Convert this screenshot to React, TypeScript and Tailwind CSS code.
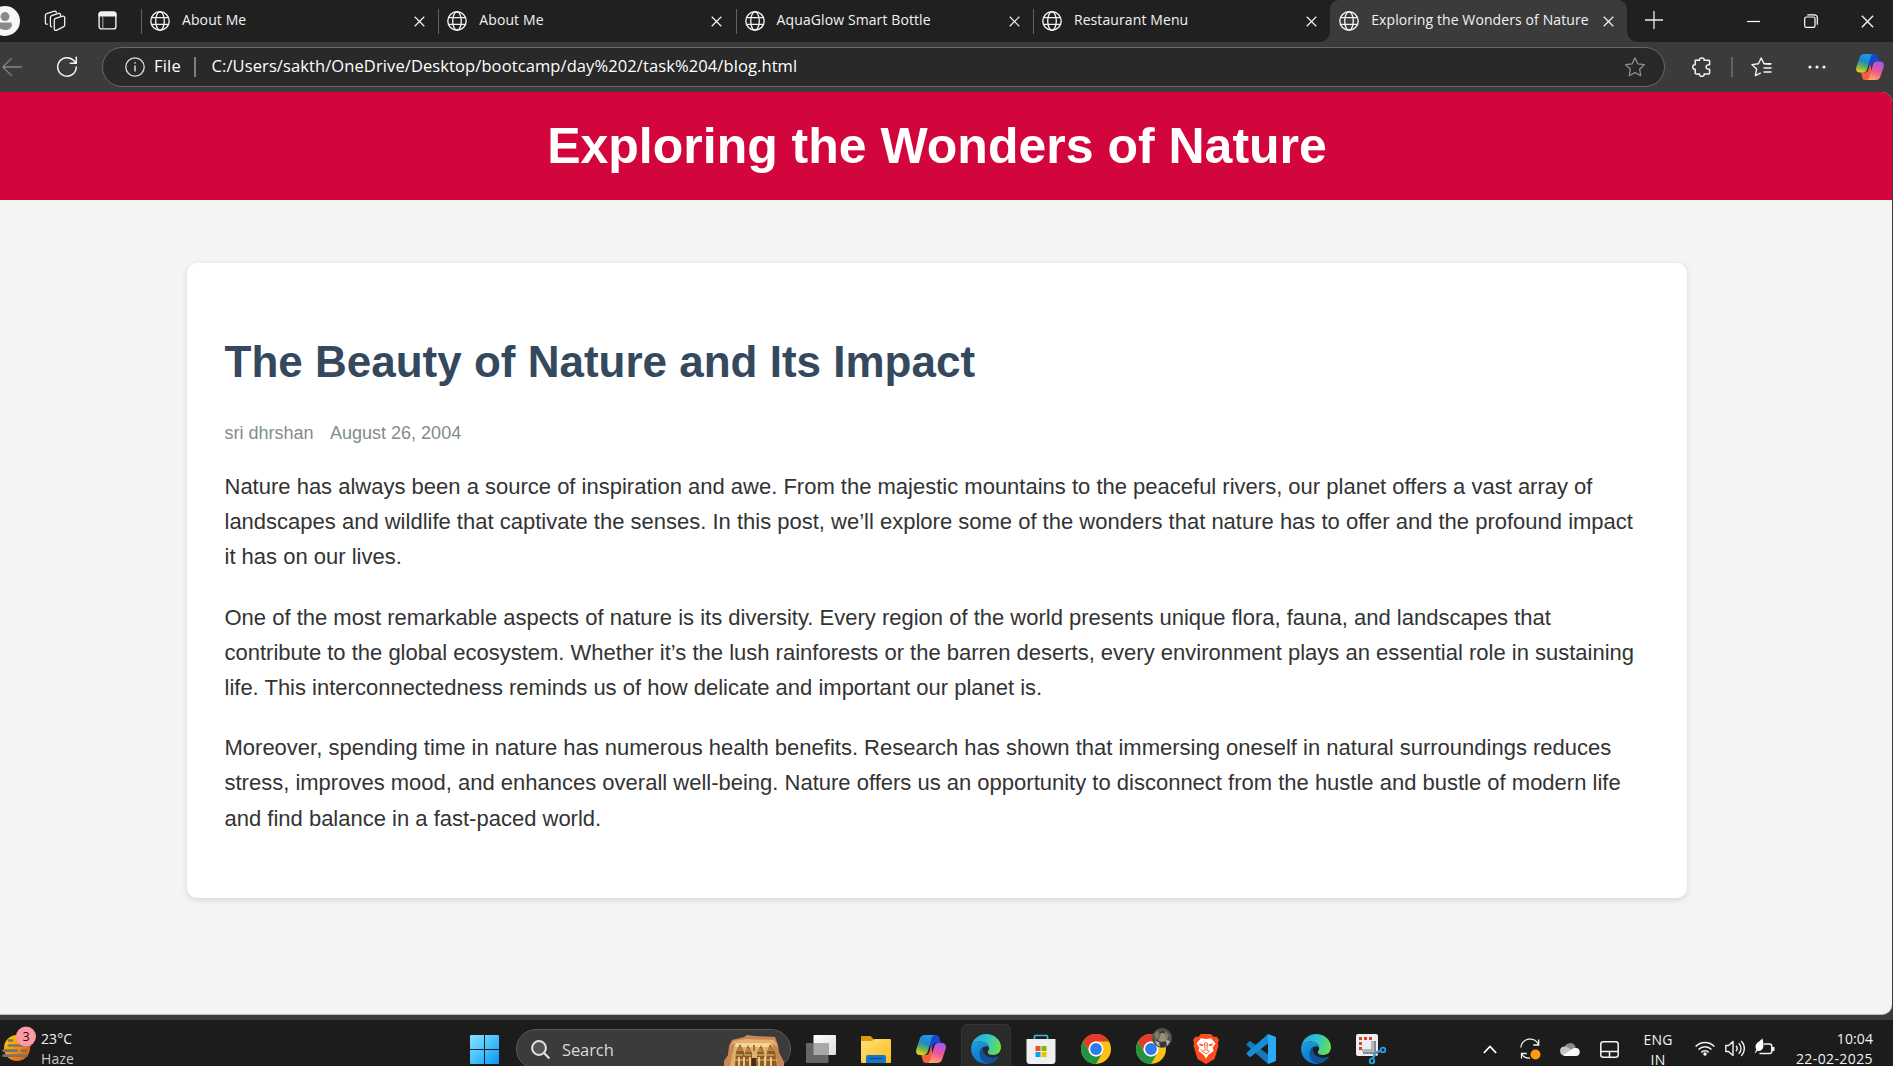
import React from "react";

const Globe = () => (
  <svg viewBox="0 0 20 20" className="size-5 shrink-0" fill="none" stroke="#f2f2f2" strokeWidth="1.35">
    <circle cx="10" cy="10" r="9.2" />
    <ellipse cx="10" cy="10" rx="4.3" ry="9.2" />
    <path d="M1.6 6.6h16.8M1.6 13.4h16.8" />
  </svg>
);

const Cross = ({ className }: { className: string }) => (
  <svg viewBox="0 0 12 12" className={className} fill="none" stroke="#f2f2f2" strokeWidth="1.3">
    <path d="M.8.8l10.4 10.4M11.2.8L.8 11.2" />
  </svg>
);

function Tab({ title, divider = true, active = false }: { title: string; divider?: boolean; active?: boolean }) {
  return (
    <div
      className={
        active
          ? "relative flex h-[42px] w-[297px] shrink-0 items-center rounded-t-[9px] bg-[#3b3b3b] pl-[9px]"
          : "flex h-[42px] w-[297.3px] shrink-0 items-center"
      }
    >
      {!active && <div className={divider ? "mr-2 h-[25px] w-px bg-[#636363]" : "mr-2 w-px"} />}
      <Globe />
      <span className="ml-3 w-[232px] shrink-0 whitespace-nowrap pb-[3px] text-[14px] tracking-[0.1px] text-[#f2f2f2]">{title}</span>
      <Cross className="size-[11px] shrink-0" />
      {active && (
        <>
          <div className="absolute -left-[10px] bottom-0 size-[10px] bg-[radial-gradient(circle_at_0_0,#202020_9.5px,#3b3b3b_10px)]" />
          <div className="absolute -right-[10px] bottom-0 size-[10px] bg-[radial-gradient(circle_at_100%_0,#202020_9.5px,#3b3b3b_10px)]" />
        </>
      )}
    </div>
  );
}

function TabStrip() {
  return (
    <div className="flex h-[42px] shrink-0 items-center overflow-hidden bg-[#202020]">
      <div className="flex w-[141px] shrink-0 items-center">
        <svg viewBox="0 0 30 30" className="-ml-[10px] size-[30px] shrink-0">
          <circle cx="15" cy="15" r="15" fill="#f7f7f7" />
          <circle cx="15" cy="10.6" r="4.5" fill="#8a8a8a" />
          <path d="M8 18.5a2 2 0 0 1 2-2h10a2 2 0 0 1 2 2c0 3.500-3 5.500-7 5.500s-7-2-7-5.500z" fill="#8a8a8a" />
        </svg>
        <svg viewBox="0 0 22 22" className="ml-[23.5px] size-[22px] shrink-0" fill="none" stroke="#f0f0f0" strokeWidth="1.3" strokeLinejoin="round" strokeLinecap="round">
          <path d="M11.500 8.300l7.300-2.100a1.500 1.500 0 0 1 1.900 1.500v7.200a2 2 0 0 1-1.400 1.900l-6.900 3.500a1.500 1.500 0 0 1-2.100-1.400v-8.500a2 2 0 0 1 1.200-2.100z" />
          <path d="M16.500 5.500v-.9a1.400 1.400 0 0 0-1.900-1.300L7.700 5.600a2 2 0 0 0-1.300 1.900v7.800a1.400 1.400 0 0 0 1.200 1.500" />
          <path d="M12.300 2.800v-.4A1.400 1.400 0 0 0 10.500 1.200L2.800 3.700a2 2 0 0 0-1.400 1.900v7.300a1.400 1.400 0 0 0 1.800 1.300" />
        </svg>
        <svg viewBox="0 0 19 19" className="mb-px ml-8 size-[19px] shrink-0" fill="none">
          <rect x="1.100" y="1.100" width="16.800" height="16.800" rx="2.500" stroke="#f2f2f2" strokeWidth="1.400" />
          <path d="M.5 5.500V3a2.500 2.500 0 0 1 2.500-2.500h13a2.500 2.500 0 0 1 2.500 2.500v2.500z" fill="#f2f2f2" />
          <path d="M4.800 5v12.500" stroke="#999" strokeWidth="1.200" />
        </svg>
      </div>
      <Tab title="About Me" />
      <Tab title="About Me" />
      <Tab title="AquaGlow Smart Bottle" />
      <Tab title="Restaurant Menu" />
      <Tab title="Exploring the Wonders of Nature" active />
      <svg viewBox="0 0 18 18" className="mb-[2px] ml-[18px] size-[18px] shrink-0" stroke="#ececec" strokeWidth="1.300">
        <path d="M9 0v18M0 9h18" />
      </svg>
      <svg viewBox="0 0 13 13" className="ml-[84px] size-[13px] shrink-0" stroke="#fff" strokeWidth="1.200">
        <path d="M0 6.500h13" />
      </svg>
      <svg viewBox="0 0 14 14" className="ml-[43.500px] size-[14px] shrink-0" fill="none" stroke="#fff" strokeWidth="1.200">
        <rect x=".7" y="3" width="10.300" height="10.300" rx="1.600" />
        <path d="M3.300.8h7.200a2.800 2.800 0 0 1 2.800 2.800v7.200" />
      </svg>
      <Cross className="ml-[43.500px] size-[13px] shrink-0" />
    </div>
  );
}

const Copilot = ({ className, id }: { className: string; id: string }) => (
  <svg viewBox="0 0 30 28" className={className}>
    <defs>
      <linearGradient id={`${id}-a`} x1=".6" y1="0" x2=".3" y2="1">
        <stop offset="0" stopColor="#199cf0" />
        <stop offset=".4" stopColor="#2186c8" />
        <stop offset=".7" stopColor="#63b45c" />
        <stop offset="1" stopColor="#f5cf0c" />
      </linearGradient>
      <linearGradient id={`${id}-b`} x1=".6" y1="0" x2=".3" y2="1">
        <stop offset="0" stopColor="#a457ee" />
        <stop offset=".5" stopColor="#ee5596" />
        <stop offset="1" stopColor="#ffab67" />
      </linearGradient>
    </defs>
    <path d="M14 0h6.300c1.600 0 2.500 1 3 2.500L25 8h-4.500c-2 0-3 1-3.500 3L15 16 13 9z" fill="#1747cc" />
    <path d="M16 28H9.800c-1.700 0-2.600-1-3-2.500L5.200 20h4.600c2 0 2.900-1 3.500-3L15 11l2 9z" fill="#f2613f" />
    <path d="M8.800 0H19c-1.800 0-2.800 1.200-3.400 3.300l-3.800 13.200c-.7 2.300-2 3.500-4.200 3.500H4c-3.200 0-4.500-2.300-3.700-5.700L3.800 3.800C4.600 1.200 6.200 0 8.800 0z" fill={`url(#${id}-a)`} />
    <path d="M21.200 28H11c1.800 0 2.800-1.200 3.400-3.300l3.800-13.200C18.900 9.200 20.200 8 22.400 8H26c3.200 0 4.500 2.300 3.700 5.700l-3.500 10.500c-.8 2.600-2.400 3.800-5 3.800z" fill={`url(#${id}-b)`} />
  </svg>
);

function Toolbar() {
  return (
    <div className="flex h-[50px] shrink-0 items-center overflow-hidden bg-[#3b3b3b]">
      <svg viewBox="0 0 20 18" className="ml-[2px] h-[18px] w-5 shrink-0" fill="none" stroke="#858585" strokeWidth="1.300" strokeLinecap="round" strokeLinejoin="round">
        <path d="M19.500 9H.8M9.300.6L.8 9l8.500 8.400" />
      </svg>
      <svg viewBox="0 0 22 22" className="ml-[34px] size-[22px] shrink-0" fill="none" stroke="#f5f5f5" strokeWidth="1.500" strokeLinecap="round" strokeLinejoin="round">
        <path d="M20.300 11A9.300 9.300 0 1 1 17.800 4.600L20 7.200M20.300 1.300V7.300H14.300" />
      </svg>
      <div className="ml-6 flex h-10 w-[1563px] shrink-0 items-center rounded-full border border-[#686868] bg-[#292929]">
        <svg viewBox="0 0 20 20" className="ml-[22px] size-5 shrink-0" fill="none" stroke="#ddd" strokeWidth="1.300">
          <circle cx="10" cy="10" r="9.200" />
          <path d="M10 8.600v6" strokeWidth="1.500" />
          <circle cx="10" cy="5.900" r=".5" strokeWidth="1" />
        </svg>
        <span className="ml-[9px] w-[40px] pb-px text-[16.500px] tracking-[0.2px] text-white">File</span>
        <div className="h-5 w-[1.500px] bg-[#808080]" />
        <span className="ml-4 flex-1 whitespace-nowrap pb-px text-[16.500px] tracking-[0.1px] text-white">C:/Users/sakth/OneDrive/Desktop/bootcamp/day%202/task%204/blog.html</span>
        <svg viewBox="0 0 20 20" className="mr-[19px] size-5 shrink-0" fill="none" stroke="#8d8d8d" strokeWidth="1.300" strokeLinejoin="round">
          <path d="M10 .9l2.800 5.900 6.500.9-4.700 4.500 1.200 6.500L10 15.600l-5.800 3.100 1.200-6.500L.7 7.700l6.500-.9z" />
        </svg>
      </div>
      <svg viewBox="0 0 20 20" className="ml-[26.500px] size-5 shrink-0" fill="none" stroke="#f4f4f4" strokeWidth="1.500" strokeLinejoin="round">
        <path d="M3.200 3.300h4.300c-.7-3.200 5.300-3.200 4.600 0h4.500a1 1 0 0 1 1 1v3.400c-4.700-.7-4.700 5.300 0 4.600V16a1 1 0 0 1-1 1h-4.500c.7 3.200-5.300 3.200-4.600 0H4.200a1 1 0 0 1-1-1v-3.700c-3.200.7-3.200-5.300 0-4.600z" />
      </svg>
      <div className="ml-[19.500px] h-5 w-[1.500px] bg-[#636363]" />
      <svg viewBox="0 0 21 20" className="ml-[18.500px] h-5 w-[21px] shrink-0" fill="none" stroke="#f4f4f4" strokeWidth="1.400" strokeLinejoin="round">
        <path d="M19.500 7.300L13 6.700 10.200 1 7.400 6.700l-6.500.9 4.700 4.500-1.200 6.500 5.400-2.800M13.500 6.700H20.500M12.500 11H20.500M12.500 15H20.500" />
      </svg>
      <svg viewBox="0 0 18 4" className="ml-[35.500px] h-1 w-[18px] shrink-0" fill="#f4f4f4">
        <circle cx="2" cy="2" r="1.600" />
        <circle cx="9" cy="2" r="1.600" />
        <circle cx="16" cy="2" r="1.600" />
      </svg>
      <Copilot id="bar" className="ml-[30px] h-[26px] w-7 shrink-0" />
    </div>
  );
}

function Page() {
  return (
    <div className="flex h-[928px] shrink-0 bg-[#3b3b3b] pr-px pb-[5px]">
      <div className="flex-1 overflow-hidden rounded-r-[10px] border-b border-[#b9bdba] bg-[#f4f4f4] font-['Liberation_Sans',Arial,sans-serif]">
        <header className="flex h-[108px] items-center justify-center bg-[#d2063c] pr-[18px]">
          <h1 className="text-[50px] font-bold leading-[58px] text-white">Exploring the Wonders of Nature</h1>
        </header>
        <main className="pt-[63px] pr-[18px]">
          <article className="mx-auto h-[635px] w-[1500px] rounded-[10px] bg-white px-[37.500px] pt-[73px] shadow-[0_2px_6px_rgba(0,0,0,0.13)]">
            <h2 className="text-[44px] font-bold leading-[52px] text-[#34495e]">The Beauty of Nature and Its Impact</h2>
            <div className="mt-[31px] flex gap-[16.500px] text-[18px] leading-7 text-[#7f8c8d]">
              <span>sri dhrshan</span>
              <span>August 26, 2004</span>
            </div>
            <div className="mt-[22px] flex flex-col gap-[25px] text-[22px] leading-[35.2px] text-[#333]">
              <p>
                Nature has always been a source of inspiration and awe. From the majestic mountains to the peaceful rivers, our planet offers a vast array of landscapes and wildlife that captivate the senses. In this post, we’ll explore some of the wonders that nature has to offer and the profound impact it has on our lives.
              </p>
              <p>
                One of the most remarkable aspects of nature is its diversity. Every region of the world presents unique flora, fauna, and landscapes that contribute to the global ecosystem. Whether it’s the lush rainforests or the barren deserts, every environment plays an essential role in sustaining life. This interconnectedness reminds us of how delicate and important our planet is.
              </p>
              <p>
                Moreover, spending time in nature has numerous health benefits. Research has shown that immersing oneself in natural surroundings reduces stress, improves mood, and enhances overall well-being. Nature offers us an opportunity to disconnect from the hustle and bustle of modern life and find balance in a fast-paced world.
              </p>
            </div>
          </article>
        </main>
      </div>
    </div>
  );
}

const Edge = ({ id }: { id: string }) => (
  <svg viewBox="0 0 30 30" className="size-[30px]">
    <defs>
      <linearGradient id={`${id}-t`} x1="0" y1=".3" x2="1" y2=".5">
        <stop offset="0" stopColor="#2aa5dc" />
        <stop offset=".5" stopColor="#2fc3cf" />
        <stop offset="1" stopColor="#6be04c" />
      </linearGradient>
      <linearGradient id={`${id}-l`} x1="0" y1="0" x2=".4" y2="1">
        <stop offset="0" stopColor="#1fa0dc" />
        <stop offset="1" stopColor="#0873cf" />
      </linearGradient>
    </defs>
    <path d="M.2 13C1.200 5.500 7.500 0 15 0c8.500 0 15 6 15 13 0 5-3.500 8-8 8-3.500 0-5.300-1.500-5.300-2.800 0-1 1.500-1.600 1.500-4.100C18.200 10.500 14 7.500 9.500 7.500 5 7.500 1.500 9.500.2 13z" fill={`url(#${id}-t)`} />
    <path d="M.2 13C1.200 9.500 5 7.500 9.500 7.500c4.800 0 8.700 3 8.700 6.600 0 0-1.300-2-3.900-1.700-3.800.4-5.900 4-5.500 8 .4 4.500 4.200 8.600 9.700 9.200C9 31.800-1 24.500.2 13z" fill={`url(#${id}-l)`} />
    <path d="M12.200 13c-2.600 1.600-3.800 4.500-3.400 7.500.6 5 5 9.300 10 9 3.500-.7 6.800-3 8.800-6.300.4-.7-.2-1.100-.8-.8-5.800 2.800-12.200.6-14.200-3.900-.8-1.900-.9-3.800-.4-5.500z" fill="#12509e" />
  </svg>
);

const Chrome = () => (
  <svg viewBox="0 0 30 30" className="size-[30px] shrink-0">
    <circle cx="15" cy="15" r="15" fill="#fbc116" />
    <path d="M2 7.500A15 15 0 0 1 28 7.500H15A7.500 7.500 0 0 0 8.500 18.700z" fill="#e33b2e" />
    <path d="M2 7.500l6.500 11.300A7.500 7.500 0 0 0 21.500 18.700L15 30A15 15 0 0 1 2 7.500z" fill="#229342" />
    <circle cx="15" cy="15" r="7.500" fill="#fff" />
    <circle cx="15" cy="15" r="5.900" fill="#2d79ee" />
  </svg>
);

const SearchArt = () => (
  <svg viewBox="0 0 60 31" className="h-[31px] w-[60px] shrink-0">
    <path d="M0 31v-5l4-6 1-9 3-6 12-3 3-2 8 1 20 1 3 8 1 7 5 10v4z" fill="#c98753" />
    <path d="M5 11l5-5 12-2 28 1 4 7-8-5H13z" fill="#e9ae77" />
    <path d="M11 7h37l6 24H6z" fill="#dcb36a" />
    <path d="M12 8h35l1 4H11z" fill="#f6d793" />
    <path d="M11 31l1-14 4-8 4 8 2 14zM20 31l1-13 3-8 4 8v13zM33 31V18l4-8 3 8 1 13zM42 31l1-14 3-8 5 8 2 14z" fill="#8d5a2a" />
    <path d="M13 16l3-5 3 5zm8 1l3-5 3 5zm12 0l3-5 3 5zm10-1l3-5 4 5z" fill="#bc823f" />
    <path d="M12 20h7m2 0h6m6 0h7m3 0h7M11 25h9m2 0h5m6 0h8m2 0h10" stroke="#edc37a" strokeWidth="1" />
    <path d="M15 22v9m5-9v9m6-9v9m9-9v9m6-9v9m6-9v9" stroke="#f3d18b" strokeWidth="1.800" />
    <path d="M27.500 23h5v8h-5z" fill="#4a2b13" />
    <path d="M29 10h2v6h-2z" fill="#a36f32" />
  </svg>
);

const Cell = ({ children, active = false }: { children: React.ReactNode; active?: boolean }) => (
  <div className="flex w-[55px] shrink-0 justify-center">
    <div
      className={
        active
          ? "flex h-[50px] w-[50px] justify-center rounded-[6px] border border-[#353535] bg-[#2a2a2a] pt-[9px]"
          : "flex h-[50px] w-[50px] justify-center pt-[10px]"
      }
    >
      {children}
    </div>
  </div>
);

function Taskbar() {
  return (
    <div className="flex h-[46px] shrink-0 overflow-hidden bg-[#1c1c1c] text-[#f2f2f2]">
      <div className="flex w-[470px] shrink-0 items-start">
        <svg viewBox="0 0 36 36" className="ml-[2px] mt-[6px] size-9 shrink-0">
          <defs>
            <linearGradient id="sun" x1="0" y1="0" x2="1" y2="1">
              <stop offset=".1" stopColor="#ffc60a" />
              <stop offset=".9" stopColor="#e5590b" />
            </linearGradient>
          </defs>
          <circle cx="15" cy="22" r="13" fill="url(#sun)" />
          <path d="M7 14.500h3M7 19.500h21M1.500 24.700h13M20 24.700h4M1.500 29.600h23" stroke="#747474" strokeWidth="2.700" strokeLinecap="round" />
          <circle cx="24" cy="10.500" r="10" fill="#ff99a4" />
          <text x="24" y="15" textAnchor="middle" fontSize="12.500" fill="#111">3</text>
        </svg>
        <div className="ml-[3px] mt-[13px] flex flex-col gap-2 text-[14px] leading-3 tracking-[0.1px]">
          <div>23°C</div>
          <div className="text-[#c8c8c8]">Haze</div>
        </div>
      </div>
      <svg viewBox="0 0 29 29" className="mt-[15px] size-[29px] shrink-0">
        <defs>
          <linearGradient id="win" x1="0" y1="0" x2="1" y2="1" >
            <stop offset="0" stopColor="#8ce1ff" />
            <stop offset=".5" stopColor="#45c3fd" />
            <stop offset="1" stopColor="#0a93f6" />
          </linearGradient>
        </defs>
        <path d="M1 0h13v14H0V1a1 1 0 0 1 1-1zM15 0h13a1 1 0 0 1 1 1v13H15zM0 15h14v14H1a1 1 0 0 1-1-1zM15 15h14v13a1 1 0 0 1-1 1H15z" fill="url(#win)" />
      </svg>
      <div className="ml-[17px] mt-[9px] flex h-10 w-[275px] shrink-0 items-start rounded-full border border-[#5a5a5a] bg-[#3b3b3b]">
        <svg viewBox="0 0 19 19" className="ml-[14px] mt-[10px] size-[19px] shrink-0" fill="none" stroke="#dfe3e8" strokeWidth="2" strokeLinecap="round">
          <circle cx="8" cy="8" r="6.900" fill="#555" />
          <path d="M13 13l4.700 4.700" strokeWidth="2.300" />
        </svg>
        <span className="ml-[12px] mt-[8px] w-[162px] shrink-0 text-[16.500px] leading-6 tracking-[-0.1px] text-[#d8d8d8]">Search</span>
        <div className="mt-[5px] h-[32px] overflow-hidden"><SearchArt /></div>
      </div>
      <div className="ml-[2px] mt-1 flex shrink-0">
        <Cell>
          <svg viewBox="0 0 30 30" className="size-[30px]">
            <defs>
              <linearGradient id="tv" x1="0" y1="0" x2="1" y2="1"><stop stopColor="#fff" /><stop offset="1" stopColor="#dedede" /></linearGradient>
            </defs>
            <rect x="7.500" y="1" width="22.500" height="20" rx="1" fill="url(#tv)" />
            <rect x="0" y="9" width="22.500" height="20" rx="1" fill="#666" />
            <path d="M7.500 9h15v12h-15z" fill="#a9a9a9" />
          </svg>
        </Cell>
        <Cell>
          <svg viewBox="0 0 30 30" className="size-[30px]">
            <defs>
              <linearGradient id="fold" x1="0" y1="0" x2="1" y2="1"><stop stopColor="#ffe07c" /><stop offset="1" stopColor="#fcbd1a" /></linearGradient>
            </defs>
            <path d="M0 3a1 1 0 0 1 1-1h8.500l3.500 3.500H29V12H0z" fill="#dd9b05" />
            <path d="M0 7h11l2.500-2H29a1 1 0 0 1 1 1v22a1 1 0 0 1-1 1H1a1 1 0 0 1-1-1z" fill="url(#fold)" />
            <path d="M5 29v-6a2 2 0 0 1 2-2h16a2 2 0 0 1 2 2v6z" fill="#1478c8" />
            <path d="M8 24.500h14" stroke="#0b4d8c" strokeWidth="1.200" />
          </svg>
        </Cell>
        <Cell><Copilot id="task" className="mt-px h-[28px] w-[30px]" /></Cell>
        <Cell active><Edge id="e1" /></Cell>
        <Cell>
          <svg viewBox="0 0 30 30" className="size-[30px]">
            <path d="M8.500 6V2.500a1 1 0 0 1 1-1h11a1 1 0 0 1 1 1V6" fill="none" stroke="#34b9ee" strokeWidth="1.700" />
            <path d="M.5 5h29v21.500a3.500 3.500 0 0 1-3.500 3.500H4a3.500 3.500 0 0 1-3.500-3.500z" fill="#f0f0f1" />
            <path d="M9.500 12h5v5h-5z" fill="#f25022" /><path d="M15.500 12h5v5h-5z" fill="#7fba00" />
            <path d="M9.500 18h5v5h-5z" fill="#00a4ef" /><path d="M15.500 18h5v5h-5z" fill="#ffb900" />
          </svg>
        </Cell>
        <Cell><Chrome /></Cell>
        <Cell>
          <div className="relative size-[30px]">
            <Chrome />
            <svg viewBox="0 0 20 20" className="absolute -top-[6px] left-4 size-5">
              <circle cx="10" cy="10" r="10" fill="#535647" />
              <path d="M2 6l4-3 2 5-4 4zM13 3l4 4-2 5-3-4z" fill="#788062" />
              <path d="M9 4c3-2 5 1 4 4l2 4-3 5H7l-1-5 2-3z" fill="#a08a7c" />
              <path d="M8 5c1-3 5-3 5 1l-2-1zM5 12l4 2 6-1-2 6H6z" fill="#333839" />
              <path d="M3 13l4 1 1 5-3-2zM14 12l4 1-3 5z" fill="#b3b7bb" />
            </svg>
          </div>
        </Cell>
        <Cell>
          <svg viewBox="0 0 26 30" className="h-[30px] w-[26px]">
            <path d="M8 0h10l3 3 2.500-.5L26 6l-1 3 .5 3-4 13L13 30l-8.500-5L.5 12 1 9 0 6l2.500-3.500L5 3z" fill="#fb4c20" />
            <path d="M13 5l5-.8 4.500 5.300-2.800 4 .8 3.500-4.700 3.500-2.800 4-2.800-4-4.700-3.500.8-3.500-2.800-4L8 4.200z" fill="#fff" />
            <path d="M6 9.500l4.500 1-.8 1.500-3-.5zM20 9.500l-4.500 1 .8 1.500 3-.5zM11 9.500L13 8l2 1.500-.8 6L17 17.500 13 20l-4-2.500 2.800-2zM7.500 14.500L10 17l-2-.5z" fill="#fb4c20" />
            <path d="M12.300 9h1.400l-.2 7h-1zM10 17.500l3-1.500 3 1.500-3 1.700z" fill="#fff" />
          </svg>
        </Cell>
        <Cell>
          <svg viewBox="0 0 30 30" className="size-[30px]">
            <path d="M1 9.500l2-2a1.500 1.500 0 0 1 2 0L22 20.500V30L1 11.500a1.400 1.400 0 0 1 0-2z" fill="#1679b9" />
            <path d="M1 20.500l2 2a1.500 1.500 0 0 0 2 0L22 9.500V0L1 18.500a1.400 1.400 0 0 0 0 2z" fill="#168dd5" />
            <path d="M22 0l7 2.500a1.500 1.500 0 0 1 1 1.500v22a1.500 1.500 0 0 1-1 1.500L22 30z" fill="#2aaaf3" />
          </svg>
        </Cell>
        <Cell><Edge id="e2" /></Cell>
        <Cell>
          <svg viewBox="0 0 30 30" className="size-[30px] overflow-visible">
            <rect x="0" y="0" width="22" height="22" rx="2" fill="#eceff2" />
            <path d="M16.500 7v9.500H6" fill="none" stroke="#a8adb3" strokeWidth="2.500" />
            <path d="M4.500 16V4.500H17" fill="none" stroke="#d8431c" strokeWidth="3" strokeDasharray="3 2" />
            <path d="M19 7v14l-3 4M7 19h14l4-3" fill="none" stroke="#808a94" strokeWidth="2" />
            <circle cx="27" cy="16" r="2.300" fill="none" stroke="#22a0e4" strokeWidth="1.800" />
            <circle cx="16" cy="27" r="2.300" fill="none" stroke="#22a0e4" strokeWidth="1.800" />
            <path d="M20 18l5-1.500M17 25l1.500-5" stroke="#22a0e4" strokeWidth="1.800" />
          </svg>
        </Cell>
      </div>
      <div className="ml-[85px] flex shrink-0 items-start">
        <svg viewBox="0 0 14 9" className="mt-[25px] h-[9px] w-[14px] shrink-0" fill="none" stroke="#fff" strokeWidth="1.800"><path d="M.8 8L7 1.500 13.200 8" /></svg>
        <svg viewBox="0 0 20 21" className="ml-[23px] mt-[18px] h-[21px] w-5 shrink-0 overflow-visible" fill="none" stroke="#f2f2f2" strokeWidth="1.300">
          <path d="M.8 9.500A9.300 9.300 0 0 1 18.500 6.500M18.700 1.500v5.500h-5.500M6.800 15.500H1.500v5M1.500 15.700c2 3.600 5 4.800 8.500 4.300" />
          <circle cx="15.500" cy="16.500" r="5" fill="#ff9a0e" stroke="none" />
        </svg>
        <svg viewBox="0 0 20 14" className="ml-5 mt-[22px] h-[14px] w-5 shrink-0">
          <path d="M4.500 5.500A5.800 5.800 0 0 1 15.300 4.300L16 8 8 10z" fill="#8c8c8c" />
          <path d="M4.500 13.500a4.500 4.500 0 0 1-.8-8.900c2-.4 3.500.4 5 1.500l5 3.400-3 4z" fill="#c5c5c5" />
          <path d="M3 13.200L12.500 6.800a4 4 0 0 1 3-.8 4 4 0 0 1 .5 8H5a4 4 0 0 1-2-.8z" fill="#f8f8f8" />
        </svg>
        <svg viewBox="0 0 19 17" className="ml-5 mt-[21px] h-[17px] w-[19px] shrink-0" fill="none" stroke="#f2f2f2" strokeWidth="1.500">
          <rect x=".8" y=".8" width="17.400" height="15.400" rx="2.500" /><path d="M.8 10.500h17.400M9.500 10.500v5.700" />
        </svg>
        <div className="ml-[22px] mt-[14px] flex w-[34px] flex-col gap-2 text-center text-[14px] leading-3 tracking-[0.2px]">
          <div>ENG</div><div>IN</div>
        </div>
        <svg viewBox="0 0 20 15" className="ml-[20px] mt-[21px] h-[15px] w-5 shrink-0" fill="none" stroke="#f2f2f2" strokeWidth="1.500">
          <path d="M.6 5.500a13 13 0 0 1 18.800 0M3.500 8.600a9 9 0 0 1 13 0M6.300 11.400a5.200 5.200 0 0 1 7.400 0" />
          <circle cx="10" cy="13" r="1.700" fill="#fff" stroke="none" />
        </svg>
        <svg viewBox="0 0 20 17" className="ml-[10px] mt-[20px] h-[17px] w-5 shrink-0" fill="none" stroke="#f2f2f2" strokeWidth="1.400" strokeLinejoin="round">
          <path d="M.8 5.500h2.700L8 1.500v14L3.500 11.500H.8z" /><path d="M11 5.800a4 4 0 0 1 0 5.400M13.700 3.300a7 7 0 0 1 0 10.400M16.300.9a11 11 0 0 1 0 15.200" />
        </svg>
        <svg viewBox="0 0 21 19" className="ml-[9px] mt-[18px] h-[19px] w-[21px] shrink-0" fill="none" stroke="#f2f2f2" strokeWidth="1.500">
          <path d="M10 6h5.500a2.300 2.300 0 0 1 2.300 2.300v4.900a2.300 2.300 0 0 1-2.300 2.300H5.500" /><path d="M18 9h2.500v4H18z" fill="#f2f2f2" stroke="none" />
          <path d="M8.500.5c1 4 2 9-1 11.500-2 1.500-4 .8-4 .8L.5 16l1.800-4.500C-.5 6 5 4 8.500.5z" fill="#fff" stroke="none" />
        </svg>
        <div className="ml-[10px] mt-[13px] flex w-[88px] flex-col gap-2 whitespace-nowrap text-right text-[14px] leading-3">
          <div className="tracking-[0.1px]">10:04</div><div className="tracking-[0.4px]">22-02-2025</div>
        </div>
      </div>
    </div>
  );
}

export default function App() {
  return (
    <div className="flex h-[1066px] w-[1893px] flex-col overflow-hidden bg-[#1c1c1c] font-['Open_Sans','Noto_Sans',sans-serif]">
      <TabStrip />
      <Toolbar />
      <Page />
      <Taskbar />
    </div>
  );
}
